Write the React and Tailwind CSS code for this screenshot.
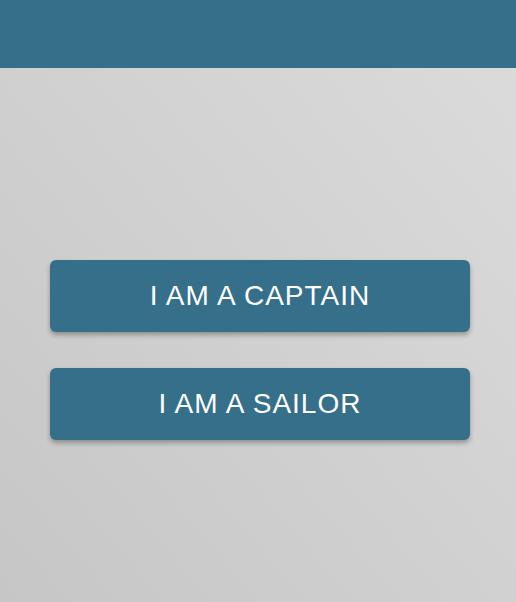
import React from "react";

function App() {
  return (
    <div
      className="min-h-[602px] flex flex-col bg-gradient-to-tr from-[#c6c6c6] to-[#dcdcdc]"
      style={{ fontFamily: '"Liberation Sans", Arial, sans-serif' }}
    >
      {/* Header */}
      <div className="h-[68px] bg-[#366f8a]" />

      {/* Role choice */}
      <div className="flex flex-col gap-9 pl-[50px] pr-[46px] pt-[192px]">
        <button className="h-[72px] w-full rounded-md bg-[#366f8a] text-white text-[28px] tracking-[1px] shadow-[0_3px_5px_rgba(0,0,0,0.3)]">
          I AM A CAPTAIN
        </button>
        <button className="h-[72px] w-full rounded-md bg-[#366f8a] text-white text-[28px] tracking-[1px] shadow-[0_3px_5px_rgba(0,0,0,0.3)]">
          I AM A SAILOR
        </button>
      </div>
    </div>
  );
}

export default App;
